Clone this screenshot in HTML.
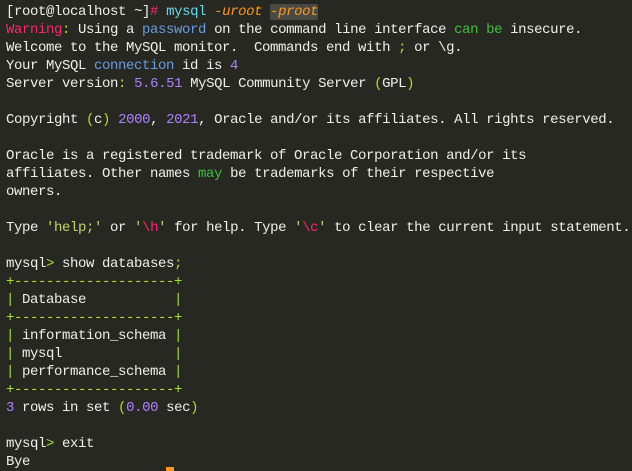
<!DOCTYPE html>
<html><head><meta charset="utf-8"><style>
html,body{margin:0;padding:0;background:#272822;width:632px;height:471px;overflow:hidden}
pre{margin:0;position:absolute;left:6px;top:3px;font-family:"Liberation Mono",monospace;font-size:14px;letter-spacing:-0.4px;line-height:18px;color:#f0f0ea;white-space:pre}
.r{color:#f92672}.g{color:#a6e22e}.b{color:#6b9be0}.p{color:#ae81ff}.c{color:#66d9ef}.o{color:#fd971f;font-style:italic}
.gr{color:#3fbf3f}.y{color:#c9d36a}
.hl{background:#4a4a45;border-radius:2px}
.cur{position:absolute;left:166px;top:467px;width:8px;height:4px;background:#fd971f}
</style></head><body>
<pre>[root@localhost ~]<span class="r">#</span> <span class="c">mysql</span> <span class="o">-uroot</span> <span class="o hl">-proot</span>
<span class="r">Warning</span><span class="g">:</span> Using a <span class="b">password</span> on the command line interface <span class="gr">can be</span> insecure.
Welcome to the MySQL monitor.  Commands end with <span class="g">;</span> or \g.
Your MySQL <span class="b">connection</span> id is <span class="p">4</span>
Server version<span class="g">:</span> <span class="p">5.6.51</span> MySQL Community Server <span class="g">(</span>GPL<span class="g">)</span>

Copyright <span class="g">(</span>c<span class="g">)</span> <span class="p">2000</span>, <span class="p">2021</span>, Oracle and/or its affiliates. All rights reserved.

Oracle is a registered trademark of Oracle Corporation and/or its
affiliates. Other names <span class="gr">may</span> be trademarks of their respective
owners.

Type <span class="y">'help;'</span> or <span class="y">'</span><span class="r">\h</span><span class="y">'</span> for help. Type <span class="y">'</span><span class="r">\c</span><span class="y">'</span> to clear the current input statement.

mysql<span class="g">&gt;</span> show databases<span class="g">;</span>
<span class="g">+--------------------+</span>
<span class="g">|</span> Database           <span class="g">|</span>
<span class="g">+--------------------+</span>
<span class="g">|</span> information_schema <span class="g">|</span>
<span class="g">|</span> mysql              <span class="g">|</span>
<span class="g">|</span> performance_schema <span class="g">|</span>
<span class="g">+--------------------+</span>
<span class="p">3</span> rows in set <span class="g">(</span><span class="p">0.00</span> sec<span class="g">)</span>

mysql<span class="g">&gt;</span> exit
Bye</pre>
<div class="cur"></div>
</body></html>
